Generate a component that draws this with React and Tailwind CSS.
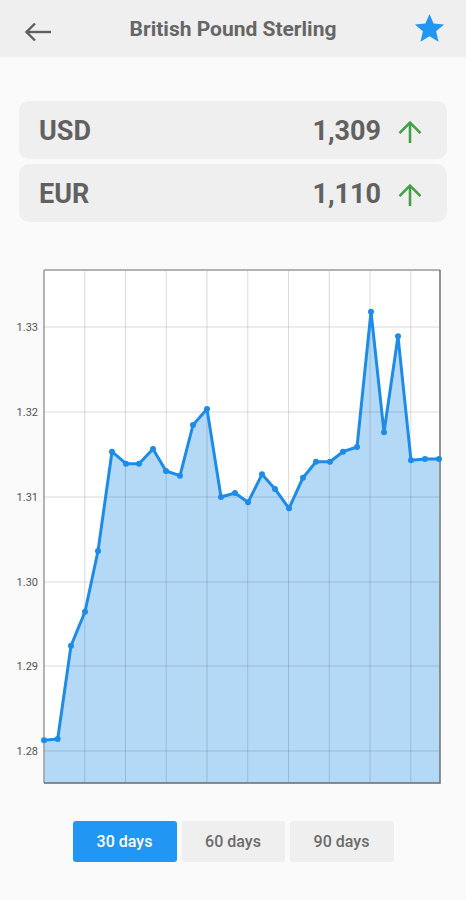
import React from "react";

const pts = [[44,741.3],[57.7,740],[71,646.7],[85,612.7],[98,552],[112,452.7],[126,464.7],[139,464.7],[153,450],[166,472],[180,476.7],[193,426],[207,410],[221,498],[235,494],[248,503.3],[262,475.3],[275,490],[289,509.3],[303,478.7],[316,462.7],[330,462.7],[343,452.7],[357,448],[371,312.7],[384,433.3],[398,337.3],[411,461.3],[425,460],[439,460]];

const vLines = [84.75, 125.5, 166.25, 207, 247.75, 288.5, 329.25, 370, 410.75];
const hLines = [
  [328, "1.33"],
  [413, "1.32"],
  [498, "1.31"],
  [583, "1.30"],
  [667, "1.29"],
  [752, "1.28"],
];

function UpArrow() {
  return (
    <svg width="26" height="24" viewBox="0 0 26 24" fill="none">
      <path d="M13 23V3" stroke="#43a047" strokeWidth="2.6" />
      <path d="M2.5 13.2 13 2.6 23.5 13.2" stroke="#43a047" strokeWidth="2.6" />
    </svg>
  );
}

function Card({ code, value }) {
  return (
    <div className="flex h-[58px] items-center justify-between rounded-[10px] bg-[#efefef] pl-[20px] pr-[24px] pt-[3px]">
      <span className="text-[27px] font-bold leading-none text-[#616161]">{code}</span>
      <div className="flex items-center gap-[16px]">
        <span className="text-[27px] font-bold leading-none text-[#616161]">{value}</span>
        <UpArrow />
      </div>
    </div>
  );
}

function Chart() {
  const line = pts.map((p) => p.join(",")).join(" ");
  const area = `44,784 ${line} 440,784`;
  return (
    <svg width="466" height="528" viewBox="0 262 466 528" className="block">
      <rect x="44" y="271" width="396" height="513" fill="#ffffff" />
      <polygon points={area} fill="#b4d9f7" />
      {vLines.map((x) => (
        <line key={x} x1={x} x2={x} y1="271" y2="784" stroke="rgba(0,0,0,0.14)" strokeWidth="1" />
      ))}
      {hLines.map(([y]) => (
        <line key={y} x1="44" x2="440" y1={y} y2={y} stroke="rgba(0,0,0,0.14)" strokeWidth="1" />
      ))}
      <line x1="44" x2="440" y1="271" y2="271" stroke="#9a9a9a" strokeWidth="1.5" />
      <line x1="44" x2="44" y1="271" y2="784" stroke="#9a9a9a" strokeWidth="1.5" />
      <line x1="440" x2="440" y1="271" y2="784" stroke="#6f6f6f" strokeWidth="1.5" />
      <line x1="44" x2="440.7" y1="784" y2="784" stroke="#6a6a6a" strokeWidth="1.5" />
      {hLines.map(([y, t]) => (
        <text key={t} x="38" y={y + 4} textAnchor="end" fontSize="11" fill="#555" fontFamily="Roboto, sans-serif">
          {t}
        </text>
      ))}
      <polyline points={line} fill="none" stroke="#1e8ce6" strokeWidth="3" strokeLinejoin="round" />
      {pts.map(([x, y], i) => (
        <circle key={i} cx={x} cy={y} r="3" fill="#1e8ce6" />
      ))}
    </svg>
  );
}

export default function App() {
  return (
    <div className="min-h-[900px] w-[466px] bg-[#fafafa]" style={{ fontFamily: "Roboto, 'Noto Sans', sans-serif" }}>
      <div className="relative flex h-[57px] items-center justify-center bg-[#efefef] pt-[3px]">
        <svg className="absolute left-[24px] top-[22px]" width="28" height="20" viewBox="0 0 28 20" fill="none">
          <path d="M27 10H3" stroke="#5f5f5f" strokeWidth="2.4" />
          <path d="M11 1.5 2.5 10 11 18.5" stroke="#5f5f5f" strokeWidth="2.4" />
        </svg>
        <span className="text-[21px] font-bold text-[#666666]">British Pound Sterling</span>
        <svg className="absolute left-[412px] top-[11px]" width="35" height="35" viewBox="0 0 24 24">
          <path fill="#2196f3" d="M12 17.27L18.18 21l-1.64-7.03L22 9.24l-7.19-.61L12 2 9.19 8.63 2 9.24l5.46 4.73L5.82 21z" />
        </svg>
      </div>
      <div className="mx-[19px] mt-[44px] flex flex-col gap-[5px]">
        <Card code="USD" value="1,309" />
        <Card code="EUR" value="1,110" />
      </div>
      <div className="mt-[39px]">
        <Chart />
      </div>
      <div className="mt-[32px] flex justify-center gap-[5px]">
        <button className="h-[41px] w-[104px] rounded-[3px] bg-[#2196f3] text-[16px] font-medium text-white">30 days</button>
        <button className="h-[41px] w-[103px] rounded-[3px] bg-[#efefef] text-[16px] font-medium text-[#6b6b6b]">60 days</button>
        <button className="h-[41px] w-[104px] rounded-[3px] bg-[#efefef] text-[16px] font-medium text-[#6b6b6b]">90 days</button>
      </div>
    </div>
  );
}
